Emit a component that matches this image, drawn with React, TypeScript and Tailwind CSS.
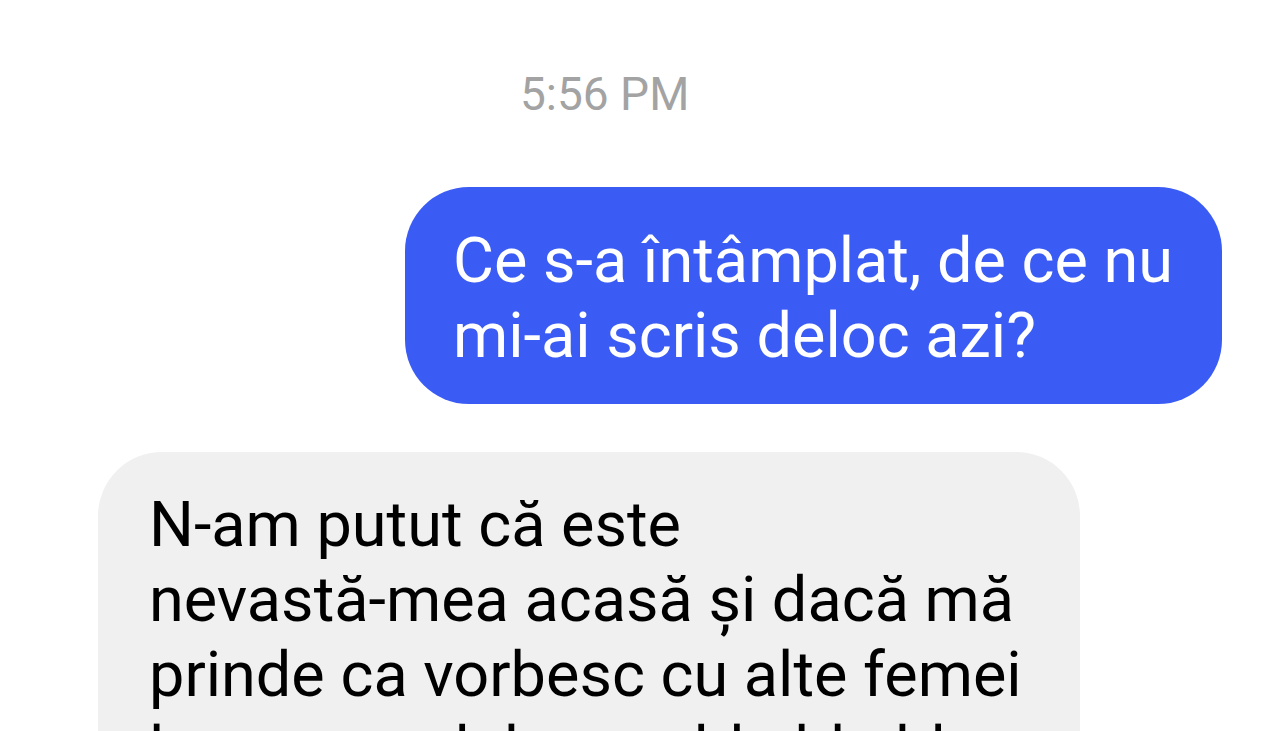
import React from "react";

export default function App() {
  return (
    <div
      className="w-[1280px] h-[731px] overflow-hidden bg-white flex flex-col"
      style={{ fontFamily: "Roboto, 'Noto Sans', sans-serif" }}
    >
      <div className="shrink-0 pt-[67px] pl-[520px] text-[46px] leading-[55px] text-[#a3a3a3] whitespace-nowrap">
        5:56 PM
      </div>

      <div className="shrink-0 mt-[65px] self-end mr-[58px] w-[817px] h-[217px] rounded-[64px] bg-[#3a5cf5] pl-[48px] pt-[36px] text-white text-[63px] leading-[75px] whitespace-nowrap">
        <div>Ce s-a întâmplat, de ce nu</div>
        <div>mi-ai scris deloc azi?</div>
      </div>

      <div className="shrink-0 mt-[48px] ml-[98px] w-[982px] rounded-[64px] bg-[#f0f0f0] pl-[51px] pt-[35px] pb-[40px] text-black text-[63px] leading-[75px] whitespace-nowrap">
        <div>N-am putut că este</div>
        <div>nevastă-mea acasă și dacă mă</div>
        <div>prinde ca vorbesc cu alte femei</div>
        <div>la un scandal mare bla bla bla</div>
        <div>și nu mai scap de ea</div>
      </div>
    </div>
  );
}
